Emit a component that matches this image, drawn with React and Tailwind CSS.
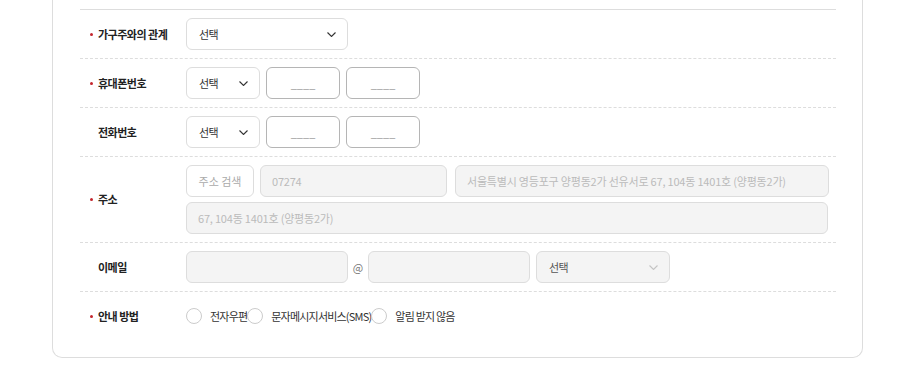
import React from 'react'

const font = { fontFamily: '"Noto Sans CJK KR", "Noto Sans", sans-serif' }

function Chevron({ light }) {
    return (
        <svg width="9" height="5" viewBox="0 0 9 5" fill="none" className="shrink-0">
            <path d="M0.5 0.5 L4.5 4.5 L8.5 0.5" stroke={light ? '#c4c4c4' : '#333'} strokeWidth="1.1" />
        </svg>
    )
}

function Label({ text, required }) {
    return (
        <div className={`w-[106px] shrink-0 flex items-center text-[11px] font-bold text-[#222] tracking-[-0.5px] ${required ? 'pl-[10px]' : 'pl-[18px]'}`}>
            {required && <span className="w-[3px] h-[3px] rounded-full bg-[#c4262e] mr-[5px]"></span>}
            {text}
        </div>
    )
}

function Select({ w, disabled }) {
    return (
        <div className={`${w} h-[32px] shrink-0 flex items-center justify-between pl-[12px] pr-[11px] rounded-[6px] border border-[#ddd] text-[11px] tracking-[-0.5px] ${disabled ? 'bg-[#f4f4f4] text-[#555]' : 'bg-white text-[#333]'}`}>
            <span>선택</span>
            <Chevron light={disabled} />
        </div>
    )
}

function Blank() {
    return (
        <div className="w-[74px] h-[32px] shrink-0 flex items-center justify-center rounded-[6px] border border-[#b5b5b5] bg-white text-[11px] text-[#999]">
            <span>____</span>
        </div>
    )
}

function Radio({ text }) {
    return (
        <label className="flex items-center">
            <span className="w-[16px] h-[16px] rounded-full border border-[#ccc] bg-white mr-[8px]"></span>
            <span className="text-[11px] text-[#333] tracking-[-0.8px]">{text}</span>
        </label>
    )
}

const row = 'flex items-center py-[8px] border-b border-dashed border-[#ddd]'
const box = 'h-[32px] flex items-center pl-[11px] rounded-[6px] border border-[#ddd] bg-[#f4f4f4] text-[11px] text-[#bbb] tracking-[-0.2px]'

export default function App() {
    return (
        <div className="bg-white h-[372px] overflow-hidden" style={font}>
            <div className="ml-[52px] w-[811px] border-x border-b border-[#ddd] rounded-b-[10px] pl-[27px] pr-[26px] pt-[9px] pb-[17px]">
                <div className="border-t border-[#ddd]">
                    <div className={row}>
                        <Label text="가구주와의 관계" required />
                        <Select w="w-[162px]" />
                    </div>

                    <div className={row}>
                        <Label text="휴대폰번호" required />
                        <div className="flex gap-[6px]">
                            <Select w="w-[74px]" />
                            <Blank />
                            <Blank />
                        </div>
                    </div>

                    <div className={row}>
                        <Label text="전화번호" />
                        <div className="flex gap-[6px]">
                            <Select w="w-[74px]" />
                            <Blank />
                            <Blank />
                        </div>
                    </div>

                    <div className={row}>
                        <Label text="주소" required />
                        <div className="flex flex-col gap-[5px]">
                            <div className="flex">
                                <button className="w-[68px] h-[32px] rounded-[6px] border border-[#ddd] bg-white text-[11px] text-[#aaa] mr-[6px]">주소 검색</button>
                                <div className={`w-[187px] mr-[8px] ${box}`}>07274</div>
                                <div className={`w-[374px] ${box}`}>서울특별시 영등포구 양평동2가 선유서로 67, 104동 1401호 (양평동2가)</div>
                            </div>
                            <div className={`w-[642px] ${box}`}>67, 104동 1401호 (양평동2가)</div>
                        </div>
                    </div>

                    <div className={row}>
                        <Label text="이메일" />
                        <div className="flex items-center">
                            <div className="w-[162px] h-[32px] rounded-[6px] border border-[#ddd] bg-[#f4f4f4]"></div>
                            <span className="w-[20px] text-center text-[11px] text-[#777]">@</span>
                            <div className="w-[162px] h-[32px] rounded-[6px] border border-[#ddd] bg-[#f4f4f4] mr-[6px]"></div>
                            <Select w="w-[134px]" disabled />
                        </div>
                    </div>

                    <div className="flex items-center py-[8px] h-[48px]">
                        <Label text="안내 방법" required />
                        <div className="flex items-center">
                            <Radio text="전자우편" />
                            <Radio text="문자메시지서비스(SMS)" />
                            <Radio text="알림 받지 않음" />
                        </div>
                    </div>
                </div>
            </div>
        </div>
    )
}
